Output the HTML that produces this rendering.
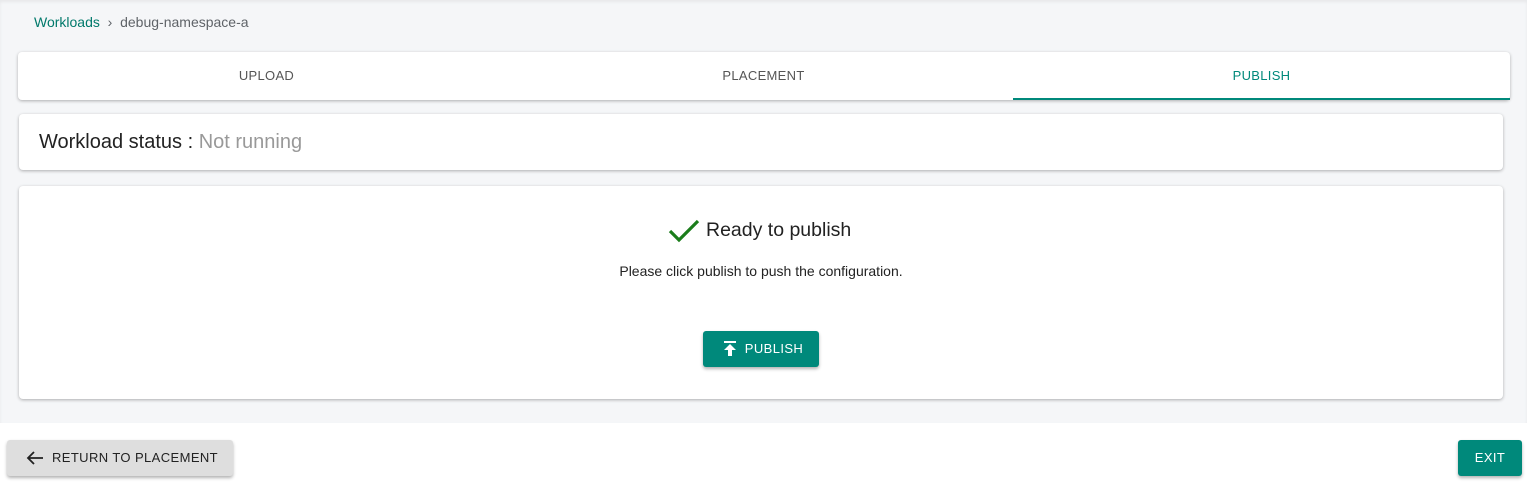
<!DOCTYPE html>
<html><head><style>
body{margin:0;width:1527px;height:490px;background:#fff;font-family:"Liberation Sans",sans-serif;position:relative;overflow:hidden}
.top{position:absolute;left:0;top:0;width:1527px;height:423px;background:#f5f6f8;box-shadow:inset 0 2px 3px rgba(0,0,0,.06)}
.bc{position:absolute;left:34px;top:14px;font-size:14px;color:#5f6368}
.bc a{color:#00796b}
.card{position:absolute;background:#fff;border-radius:4px;box-shadow:0 1px 3px rgba(0,0,0,.3)}
.tab{position:absolute;top:0;height:48px;line-height:48px;text-align:center;font-size:13px;color:#555;letter-spacing:.3px}
.btn{position:absolute;border-radius:3px;font-size:13px;letter-spacing:.4px;text-align:center;box-shadow:0 2px 3px rgba(0,0,0,.3)}
</style></head><body>
<div class="top">
<div class="bc"><a>Workloads</a>&nbsp;&nbsp;›&nbsp;&nbsp;debug-namespace-a</div>
<div class="card" style="left:18px;top:52px;width:1492px;height:48px">
<div class="tab" style="left:0;width:497px">UPLOAD</div>
<div class="tab" style="left:497px;width:497px">PLACEMENT</div>
<div class="tab" style="left:995px;width:497px;color:#00897b">PUBLISH</div>
<div style="position:absolute;left:995px;top:46px;width:497px;height:2px;background:#00897b"></div>
</div>
<div class="card" style="left:19px;top:114px;width:1484px;height:56px">
<div style="position:absolute;left:20px;top:17px;font-size:20px;color:#222">Workload status : <span style="color:#999">Not running</span></div>
</div>
<div class="card" style="left:19px;top:186px;width:1484px;height:213px">
<svg style="position:absolute;left:649px;top:32px" width="32" height="26" viewBox="0 0 32 26"><path d="M2 13l9 9L30 3" fill="none" stroke="#1b7d1b" stroke-width="3.2"/></svg>
<div style="position:absolute;left:687px;top:33px;font-size:19.5px;color:#222">Ready to publish</div>
<div style="position:absolute;left:0;width:1484px;top:77px;text-align:center;font-size:14px;color:#222">Please click publish to push the configuration.</div>
<div class="btn" style="left:684px;top:145px;width:116px;height:36px;line-height:36px;background:#00897b;color:#fff">
<svg style="position:absolute;left:20px;top:10px" width="14" height="16" viewBox="0 0 14 16"><rect x="1" y="0" width="12" height="2" fill="#fff"/><path d="M7 3L1 9h4v6h4V9h4z" fill="#fff"/></svg>
<span style="padding-left:26px">PUBLISH</span></div>
</div>
</div>
<div class="btn" style="left:7px;top:440px;width:226px;height:36px;line-height:36px;background:#dedede;color:#222">
<svg style="position:absolute;left:19px;top:10px" width="18" height="16" viewBox="0 0 18 16"><path d="M17 8H2M8 2L2 8l6 6" fill="none" stroke="#222" stroke-width="1.8"/></svg>
<span style="padding-left:30px">RETURN TO PLACEMENT</span></div>
<div class="btn" style="left:1458px;top:440px;width:64px;height:36px;line-height:36px;background:#00897b;color:#fff">EXIT</div>
</body></html>
